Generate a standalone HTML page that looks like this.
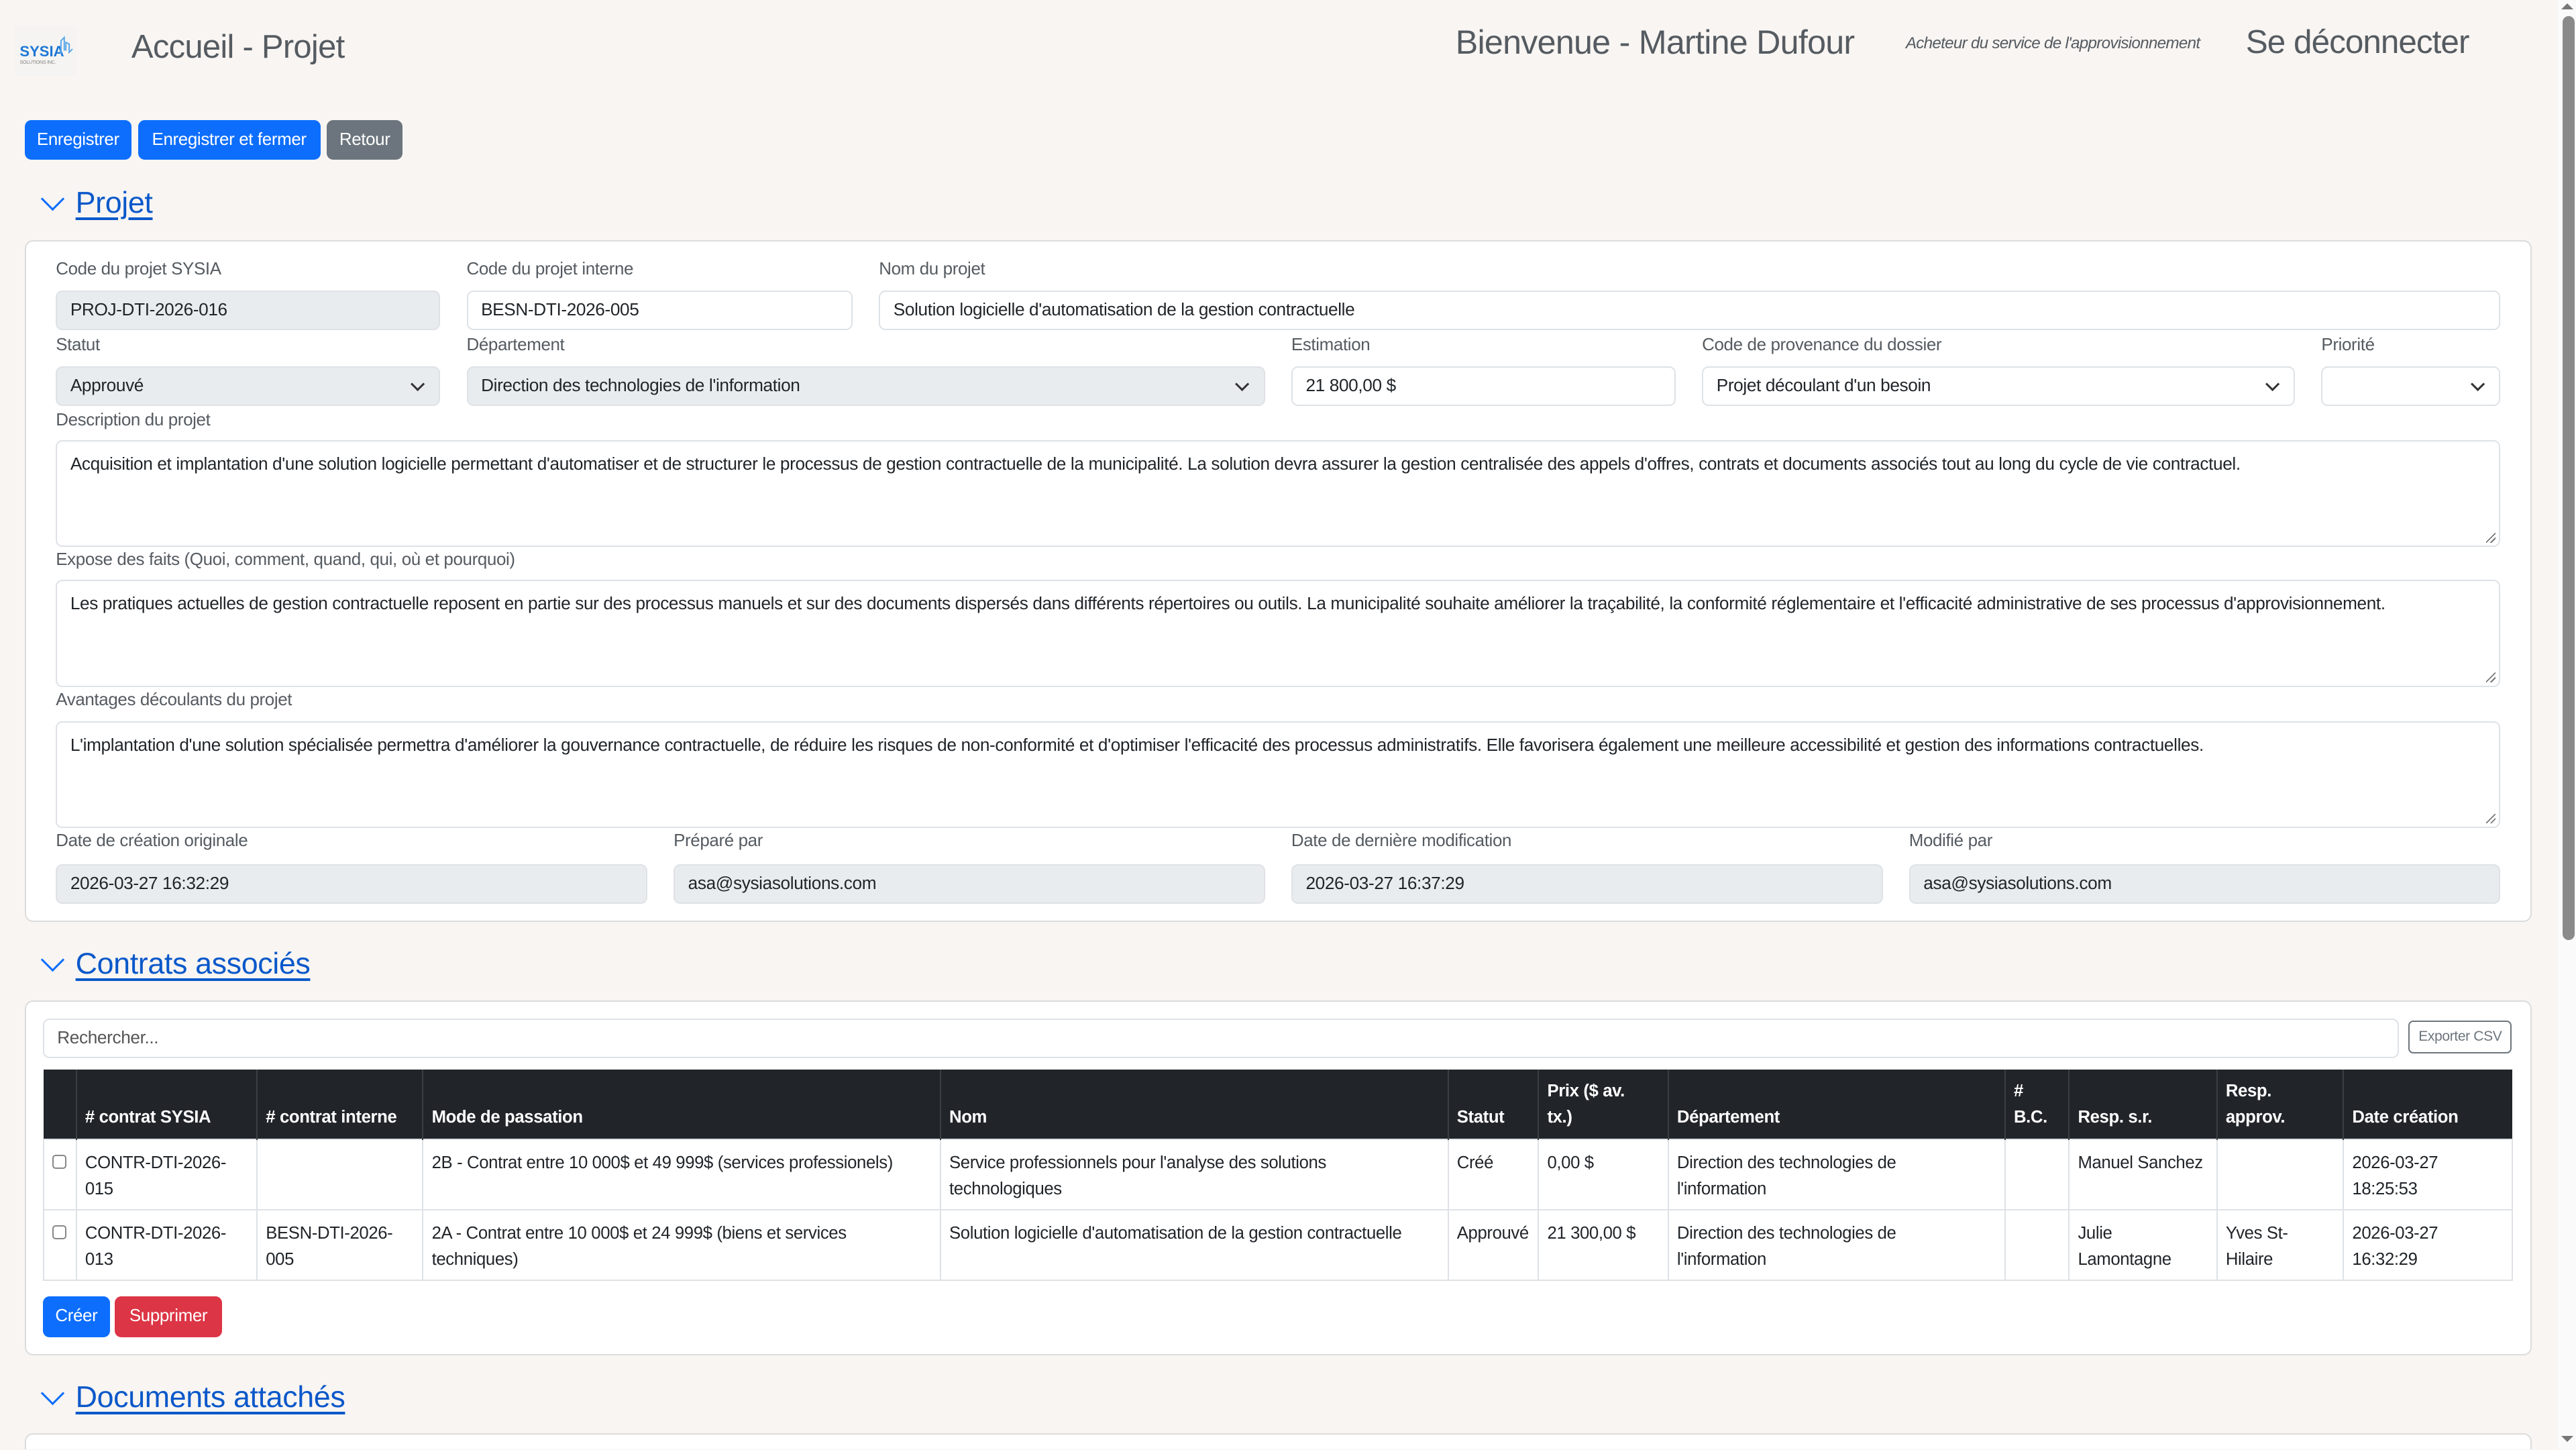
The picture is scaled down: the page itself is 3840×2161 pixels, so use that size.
<!DOCTYPE html>
<html><head><meta charset="utf-8">
<style>
html,body{margin:0;padding:0;}
body{width:3840px;height:2161px;overflow:hidden;background:#f8f5f2;}
#r{position:absolute;left:0;top:0;width:1568px;height:882px;overflow:hidden;zoom:2.44898;font-family:"Liberation Sans",sans-serif;color:#212529;font-size:10.7px;letter-spacing:-0.15px;}
.a{position:absolute;}
.lbl{position:absolute;color:#555b61;font-size:10.6px;}
.in{position:absolute;box-sizing:border-box;border:1px solid #dee2e6;border-radius:4px;background:#fff;height:24px;line-height:22px;padding-left:8px;white-space:nowrap;overflow:hidden;}
.dis{background:#e9ecef;}
.ta{position:absolute;box-sizing:border-box;border:1px solid #dee2e6;border-radius:4px;background:#fff;padding:6px 8px;line-height:15px;}
.ta:after{content:"";position:absolute;right:2px;bottom:2px;width:6px;height:6px;background:linear-gradient(135deg,transparent 45%,#777 45%,#777 55%,transparent 55%,transparent 70%,#777 70%,#777 80%,transparent 80%);}
.chev{position:absolute;right:10px;top:7px;width:5px;height:5px;border-right:1.3px solid #333;border-bottom:1.3px solid #333;transform:rotate(45deg);}
.btn{position:absolute;box-sizing:border-box;border-radius:4px;color:#fff;font-size:10.6px;text-align:center;line-height:24px;}
.h{position:absolute;color:#0a58ca;font-size:18.3px;text-decoration:underline;text-decoration-thickness:1.5px;text-underline-offset:3px;}
.hc{position:absolute;width:9px;height:9px;border-left:1.5px solid #0d6efd;border-bottom:1.5px solid #0d6efd;transform:rotate(-45deg);}
.card{position:absolute;background:#fff;border:1px solid #dcdcdc;border-radius:5px;box-sizing:border-box;}
table{border-collapse:collapse;position:absolute;left:26px;top:651px;width:1503px;font-size:10.5px;table-layout:fixed;}
th{background:#212529;color:#fff;text-align:left;vertical-align:bottom;padding:0 5px 5px 5px;font-weight:bold;line-height:16px;border-left:1px solid #3a3f44;height:37px;}
td{vertical-align:top;padding:6px 5px 4px;line-height:16px;border:1px solid #dee2e6;height:31px;white-space:nowrap;}
.cb{display:inline-block;width:7px;height:7px;border:1px solid #888;border-radius:2px;margin-top:3px;}
</style></head><body><div id="r">
<!-- header -->
<div class="a" style="left:9px;top:16px;width:38px;height:30px;background:#f5f4f2;"></div>
<div class="a" style="left:12px;top:26px;font-size:9px;font-weight:bold;color:#1e78d6;letter-spacing:0;">SYSIA</div>
<div class="a" style="left:12px;top:36px;font-size:3px;color:#888;">SOLUTIONS INC.</div>
<svg class="a" style="left:35px;top:21px" width="10" height="14" viewBox="0 0 10 14"><path d="M2 12V4l2-2v8M5 10V5l2 1v5l2-2" stroke="#5aa6e8" stroke-width="0.8" fill="none"/></svg>
<div class="a" style="left:80px;top:17px;font-size:20px;color:#555b61;letter-spacing:-0.3px;">Accueil - Projet</div>
<div class="a" style="left:886px;top:14px;font-size:20.5px;color:#555b61;letter-spacing:-0.3px;">Bienvenue - Martine Dufour</div>
<div class="a" style="left:1160px;top:21px;font-size:9.9px;font-style:italic;color:#555b61;letter-spacing:-0.3px;">Acheteur du service de l'approvisionnement</div>
<div class="a" style="left:1367px;top:14px;font-size:20.2px;color:#555b61;letter-spacing:-0.4px;">Se déconnecter</div>
<!-- scrollbar -->
<div class="a" style="left:1557px;top:0;width:11px;height:882px;background:#fafafa;"></div>
<div class="a" style="left:1560px;top:10px;width:7px;height:562px;background:#8a8a8a;border-radius:4px;"></div>
<div class="a" style="left:1559px;top:2px;width:0;height:0;border-left:4px solid transparent;border-right:4px solid transparent;border-bottom:4px solid #777;"></div>
<div class="a" style="left:1559px;top:874px;width:0;height:0;border-left:4px solid transparent;border-right:4px solid transparent;border-top:4px solid #777;"></div>
<!-- buttons -->
<div class="btn" style="left:15px;top:73px;width:65px;background:#0d6efd;">Enregistrer</div>
<div class="btn" style="left:84px;top:73px;width:111px;background:#0d6efd;">Enregistrer et fermer</div>
<div class="btn" style="left:199px;top:73px;width:46px;background:#6c757d;">Retour</div>
<!-- Projet -->
<div class="hc" style="left:27px;top:116px;"></div>
<div class="h" style="left:46px;top:113px;">Projet</div>
<div class="card" style="left:15px;top:146px;width:1526px;height:415px;"></div>
<div class="lbl" style="left:34px;top:158px;">Code du projet SYSIA</div>
<div class="lbl" style="left:284px;top:158px;">Code du projet interne</div>
<div class="lbl" style="left:535px;top:158px;">Nom du projet</div>
<div class="in dis" style="left:34px;top:177px;width:234px;">PROJ-DTI-2026-016</div>
<div class="in" style="left:284px;top:177px;width:235px;">BESN-DTI-2026-005</div>
<div class="in" style="left:535px;top:177px;width:987px;">Solution logicielle d'automatisation de la gestion contractuelle</div>
<div class="lbl" style="left:34px;top:204px;">Statut</div>
<div class="lbl" style="left:284px;top:204px;">Département</div>
<div class="lbl" style="left:786px;top:204px;">Estimation</div>
<div class="lbl" style="left:1036px;top:204px;">Code de provenance du dossier</div>
<div class="lbl" style="left:1413px;top:204px;">Priorité</div>
<div class="in dis" style="left:34px;top:223px;width:234px;">Approuvé<span class="chev"></span></div>
<div class="in dis" style="left:284px;top:223px;width:486px;">Direction des technologies de l'information<span class="chev"></span></div>
<div class="in" style="left:786px;top:223px;width:234px;">21 800,00 $</div>
<div class="in" style="left:1036px;top:223px;width:361px;">Projet découlant d'un besoin<span class="chev"></span></div>
<div class="in" style="left:1413px;top:223px;width:109px;"><span class="chev"></span></div>
<div class="lbl" style="left:34px;top:250px;">Description du projet</div>
<div class="ta" style="left:34px;top:268px;width:1488px;height:65px;">Acquisition et implantation d'une solution logicielle permettant d'automatiser et de structurer le processus de gestion contractuelle de la municipalité. La solution devra assurer la gestion centralisée des appels d'offres, contrats et documents associés tout au long du cycle de vie contractuel.</div>
<div class="lbl" style="left:34px;top:335px;">Expose des faits (Quoi, comment, quand, qui, où et pourquoi)</div>
<div class="ta" style="left:34px;top:353px;width:1488px;height:65px;">Les pratiques actuelles de gestion contractuelle reposent en partie sur des processus manuels et sur des documents dispersés dans différents répertoires ou outils. La municipalité souhaite améliorer la traçabilité, la conformité réglementaire et l'efficacité administrative de ses processus d'approvisionnement.</div>
<div class="lbl" style="left:34px;top:420px;">Avantages découlants du projet</div>
<div class="ta" style="left:34px;top:439px;width:1488px;height:65px;">L'implantation d'une solution spécialisée permettra d'améliorer la gouvernance contractuelle, de réduire les risques de non-conformité et d'optimiser l'efficacité des processus administratifs. Elle favorisera également une meilleure accessibilité et gestion des informations contractuelles.</div>
<div class="lbl" style="left:34px;top:506px;">Date de création originale</div>
<div class="lbl" style="left:410px;top:506px;">Préparé par</div>
<div class="lbl" style="left:786px;top:506px;">Date de dernière modification</div>
<div class="lbl" style="left:1162px;top:506px;">Modifié par</div>
<div class="in dis" style="left:34px;top:526px;width:360px;">2026-03-27 16:32:29</div>
<div class="in dis" style="left:410px;top:526px;width:360px;">asa@sysiasolutions.com</div>
<div class="in dis" style="left:786px;top:526px;width:360px;">2026-03-27 16:37:29</div>
<div class="in dis" style="left:1162px;top:526px;width:360px;">asa@sysiasolutions.com</div>
<!-- Contrats -->
<div class="hc" style="left:27px;top:579px;"></div>
<div class="h" style="left:46px;top:576px;">Contrats associés</div>
<div class="card" style="left:15px;top:609px;width:1526px;height:216px;"></div>
<div class="in" style="left:26px;top:620px;width:1434px;color:#555;">Rechercher...</div>
<div class="a" style="left:1466px;top:621px;width:63px;height:20px;box-sizing:border-box;border:1px solid #6c757d;border-radius:3px;font-size:8.6px;color:#6c757d;text-align:center;line-height:18px;">Exporter CSV</div>
<table>
<colgroup><col style="width:20px"><col style="width:110px"><col style="width:101px"><col style="width:315px"><col style="width:309px"><col style="width:55px"><col style="width:79px"><col style="width:205px"><col style="width:39px"><col style="width:90px"><col style="width:77px"><col style="width:103px"></colgroup>
<tr><th style="border-left:none"></th><th># contrat SYSIA</th><th># contrat interne</th><th>Mode de passation</th><th>Nom</th><th>Statut</th><th>Prix ($ av.<br>tx.)</th><th>Département</th><th>#<br>B.C.</th><th>Resp. s.r.</th><th>Resp.<br>approv.</th><th>Date création</th></tr>
<tr><td><span class="cb"></span></td><td>CONTR-DTI-2026-<br>015</td><td></td><td>2B - Contrat entre 10 000$ et 49 999$ (services professionels)</td><td>Service professionnels pour l'analyse des solutions<br>technologiques</td><td>Créé</td><td>0,00 $</td><td>Direction des technologies de<br>l'information</td><td></td><td>Manuel Sanchez</td><td></td><td>2026-03-27<br>18:25:53</td></tr>
<tr><td><span class="cb"></span></td><td>CONTR-DTI-2026-<br>013</td><td>BESN-DTI-2026-<br>005</td><td>2A - Contrat entre 10 000$ et 24 999$ (biens et services<br>techniques)</td><td>Solution logicielle d'automatisation de la gestion contractuelle</td><td>Approuvé</td><td>21 300,00 $</td><td>Direction des technologies de<br>l'information</td><td></td><td>Julie<br>Lamontagne</td><td>Yves St-<br>Hilaire</td><td>2026-03-27<br>16:32:29</td></tr>
</table>
<div class="btn" style="left:26px;top:789px;width:41px;height:25px;background:#0d6efd;">Créer</div>
<div class="btn" style="left:70px;top:789px;width:65px;height:25px;background:#dc3545;">Supprimer</div>
<!-- Documents -->
<div class="hc" style="left:27px;top:843px;"></div>
<div class="h" style="left:46px;top:840px;">Documents attachés</div>
<div class="card" style="left:15px;top:872px;width:1526px;height:40px;"></div>
</div></body></html>
